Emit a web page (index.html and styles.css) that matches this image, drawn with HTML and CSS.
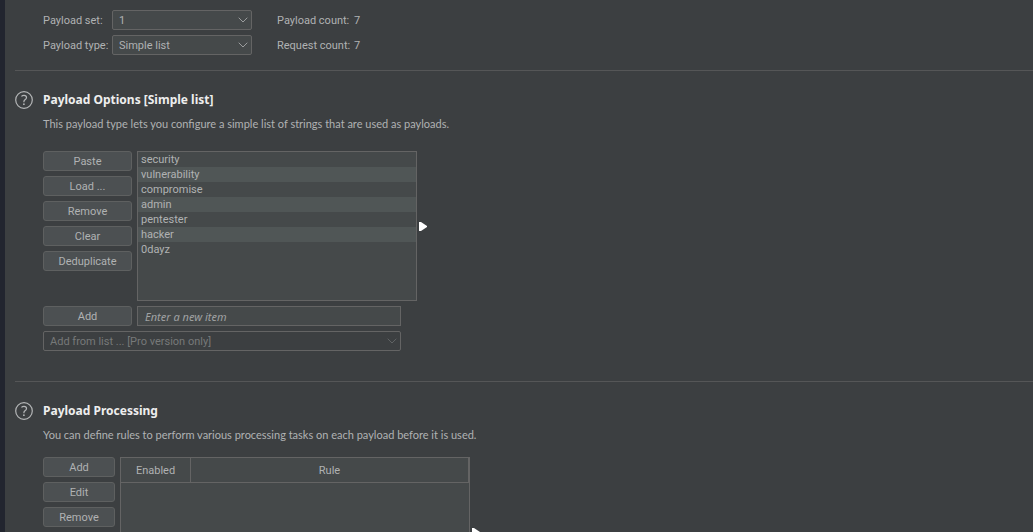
FILE: index.html
```html
<!DOCTYPE html>
<html lang="en">
<head>
<meta charset="utf-8">
<title>Payloads</title>
<link rel="stylesheet" href="styles.css">
</head>
<body>
<main class="panel">
  <section class="section sets">
    <div class="sets-grid">
      <label for="set">Payload set:</label>
      <span class="combo">
        <select id="set"><option>1</option></select>
        <svg class="chevron" viewBox="0 0 10 6" aria-hidden="true"><path d="M0.7 0.7 5 5 9.3 0.7"/></svg>
      </span>
      <span class="count-label">Payload count:</span><span>7</span>
      <label for="type">Payload type:</label>
      <span class="combo">
        <select id="type"><option>Simple list</option></select>
        <svg class="chevron" viewBox="0 0 10 6" aria-hidden="true"><path d="M0.7 0.7 5 5 9.3 0.7"/></svg>
      </span>
      <span class="count-label">Request count:</span><span>7</span>
    </div>
  </section>

  <section class="section">
    <header class="section-head">
      <button class="help" aria-label="Help">
        <svg viewBox="0 0 18 18"><circle cx="9" cy="9" r="8.3"/><path d="M6.4 5.4C7.2 4.7 8.1 4.4 9 4.4c1.5 0 2.5.8 2.5 2.1 0 1.1-.7 1.7-1.5 2.3-.8.6-1.1 1-1.1 1.9v.5"/><circle class="dot" cx="8.9" cy="13.2" r=".9"/></svg>
      </button>
      <h2>Payload Options [Simple list]</h2>
    </header>
    <p class="desc">This payload type lets you configure a simple list of strings that are used as payloads.</p>
    <div class="options">
      <div class="buttons">
        <button class="btn">Paste</button>
        <button class="btn">Load ...</button>
        <button class="btn">Remove</button>
        <button class="btn">Clear</button>
        <button class="btn">Deduplicate</button>
      </div>
      <div class="with-arrow">
        <ul class="list box">
          <li>security</li>
          <li>vulnerability</li>
          <li>compromise</li>
          <li>admin</li>
          <li>pentester</li>
          <li>hacker</li>
          <li>0dayz</li>
        </ul>
        <svg class="arrow" viewBox="0 0 8 9" aria-hidden="true"><path d="M0 0h2l6 4v1L2 9H0z"/></svg>
      </div>
    </div>
    <div class="add-form">
      <button class="btn">Add</button>
      <input type="text" class="box" placeholder="Enter a new item" aria-label="New item">
      <span class="combo from-list">
        <select disabled aria-label="Add from list"><option>Add from list ... [Pro version only]</option></select>
        <svg class="chevron" viewBox="0 0 10 6" aria-hidden="true"><path d="M0.7 0.7 5 5 9.3 0.7"/></svg>
      </span>
    </div>
  </section>

  <section class="section">
    <header class="section-head">
      <button class="help" aria-label="Help">
        <svg viewBox="0 0 18 18"><circle cx="9" cy="9" r="8.3"/><path d="M6.4 5.4C7.2 4.7 8.1 4.4 9 4.4c1.5 0 2.5.8 2.5 2.1 0 1.1-.7 1.7-1.5 2.3-.8.6-1.1 1-1.1 1.9v.5"/><circle class="dot" cx="8.9" cy="13.2" r=".9"/></svg>
      </button>
      <h2>Payload Processing</h2>
    </header>
    <p class="desc rules-desc">You can define rules to perform various processing tasks on each payload before it is used.</p>
    <div class="options rules">
      <div class="buttons">
        <button class="btn">Add</button>
        <button class="btn">Edit</button>
        <button class="btn">Remove</button>
      </div>
      <div class="with-arrow">
        <div class="box table-box">
          <table>
            <thead><tr><th class="col-enabled" scope="col">Enabled</th><th scope="col">Rule</th></tr></thead>
            <tbody></tbody>
          </table>
        </div>
        <svg class="arrow" viewBox="0 0 8 9" aria-hidden="true"><path d="M0 0h2l6 4v1L2 9H0z"/></svg>
      </div>
    </div>
  </section>
</main>
</body>
</html>
```

FILE: styles.css
```css
* { box-sizing: border-box; }

body {
  margin: 0;
  background: #3c3f41;
  color: #b0b2b3;
  font: 11px/15px Roboto, "Noto Sans", sans-serif;
}

button, input, select { font: inherit; color: inherit; }

.panel {
  height: 100vh;
  overflow: hidden;
  padding-left: 10px;
  border-left: 5px solid #22252f;
}

.section { padding: 20px 0 30px 28px; }
.section + .section { border-top: 1px solid #555657; }
.sets { padding: 10px 0 15px 28px; }

.sets-grid {
  display: grid;
  grid-template-columns: 64px 160px 72px auto;
  grid-auto-rows: 20px;
  gap: 5px;
  align-items: center;
  justify-content: start;
  white-space: nowrap;
}
.sets-grid .combo { width: 140px; }

.combo { display: grid; align-items: center; }
.combo > * { grid-area: 1 / 1; }
.combo select {
  appearance: none;
  width: 100%;
  height: 20px;
  padding: 0 24px 0 6px;
  border: 1px solid #646464;
  border-radius: 2px;
  background: #45494a;
}
.combo select:disabled { background: none; color: #777979; opacity: 1; }
.combo select:disabled + .chevron { stroke: #606364; }

.chevron {
  justify-self: end;
  width: 10px;
  height: 6px;
  margin-right: 4px;
  fill: none;
  stroke: #9b9d9e;
  pointer-events: none;
}

.section-head { display: flex; align-items: center; gap: 10px; margin-left: -28px; }
.help { width: 18px; height: 18px; padding: 0; border: 0; background: none; }
.help svg { display: block; fill: none; stroke: #b4b6b7; stroke-width: 1.2; }
.help .dot { fill: #b4b6b7; stroke: none; }

h2 { margin: 0; color: #eeeeee; font: bold 12px/18px "Noto Sans", sans-serif; }

.desc { margin: 7px 0 20px; font-family: Lato, sans-serif; }
.rules-desc { margin-bottom: 15px; }

.options { display: flex; gap: 5px; }
.buttons { display: grid; gap: 5px; align-content: start; width: 89px; }
.btn {
  height: 20px;
  padding: 0;
  border: 1px solid #5e6060;
  border-radius: 3px;
  background: #4c5052;
}

.box { border: 1px solid #646464; background: #45494a; }
.with-arrow { display: flex; align-items: center; gap: 2px; }
.arrow { width: 8px; height: 9px; fill: #ffffff; }

.list { width: 280px; height: 150px; margin: 0; padding: 0; list-style: none; }
.list li { padding-left: 3px; }
.list li:nth-child(even) { background: #505656; }

.add-form {
  display: grid;
  grid-template-columns: 89px 264px;
  gap: 5px;
  margin-top: 5px;
}
.add-form input { height: 20px; padding: 0 7px; border-radius: 0; font-family: "Noto Sans", sans-serif; }
.add-form input::placeholder { color: #a0a2a3; font-style: italic; opacity: 1; }
.from-list { grid-column: 1 / -1; }

.rules .buttons { width: 72px; }
.table-box { width: 350px; height: 150px; }
table { width: 100%; border-spacing: 0; table-layout: fixed; }
th {
  height: 25px;
  padding: 0;
  border-bottom: 1px solid #646464;
  border-right: 1px solid #646464;
  font-weight: normal;
}
.col-enabled { width: 70px; }
```
